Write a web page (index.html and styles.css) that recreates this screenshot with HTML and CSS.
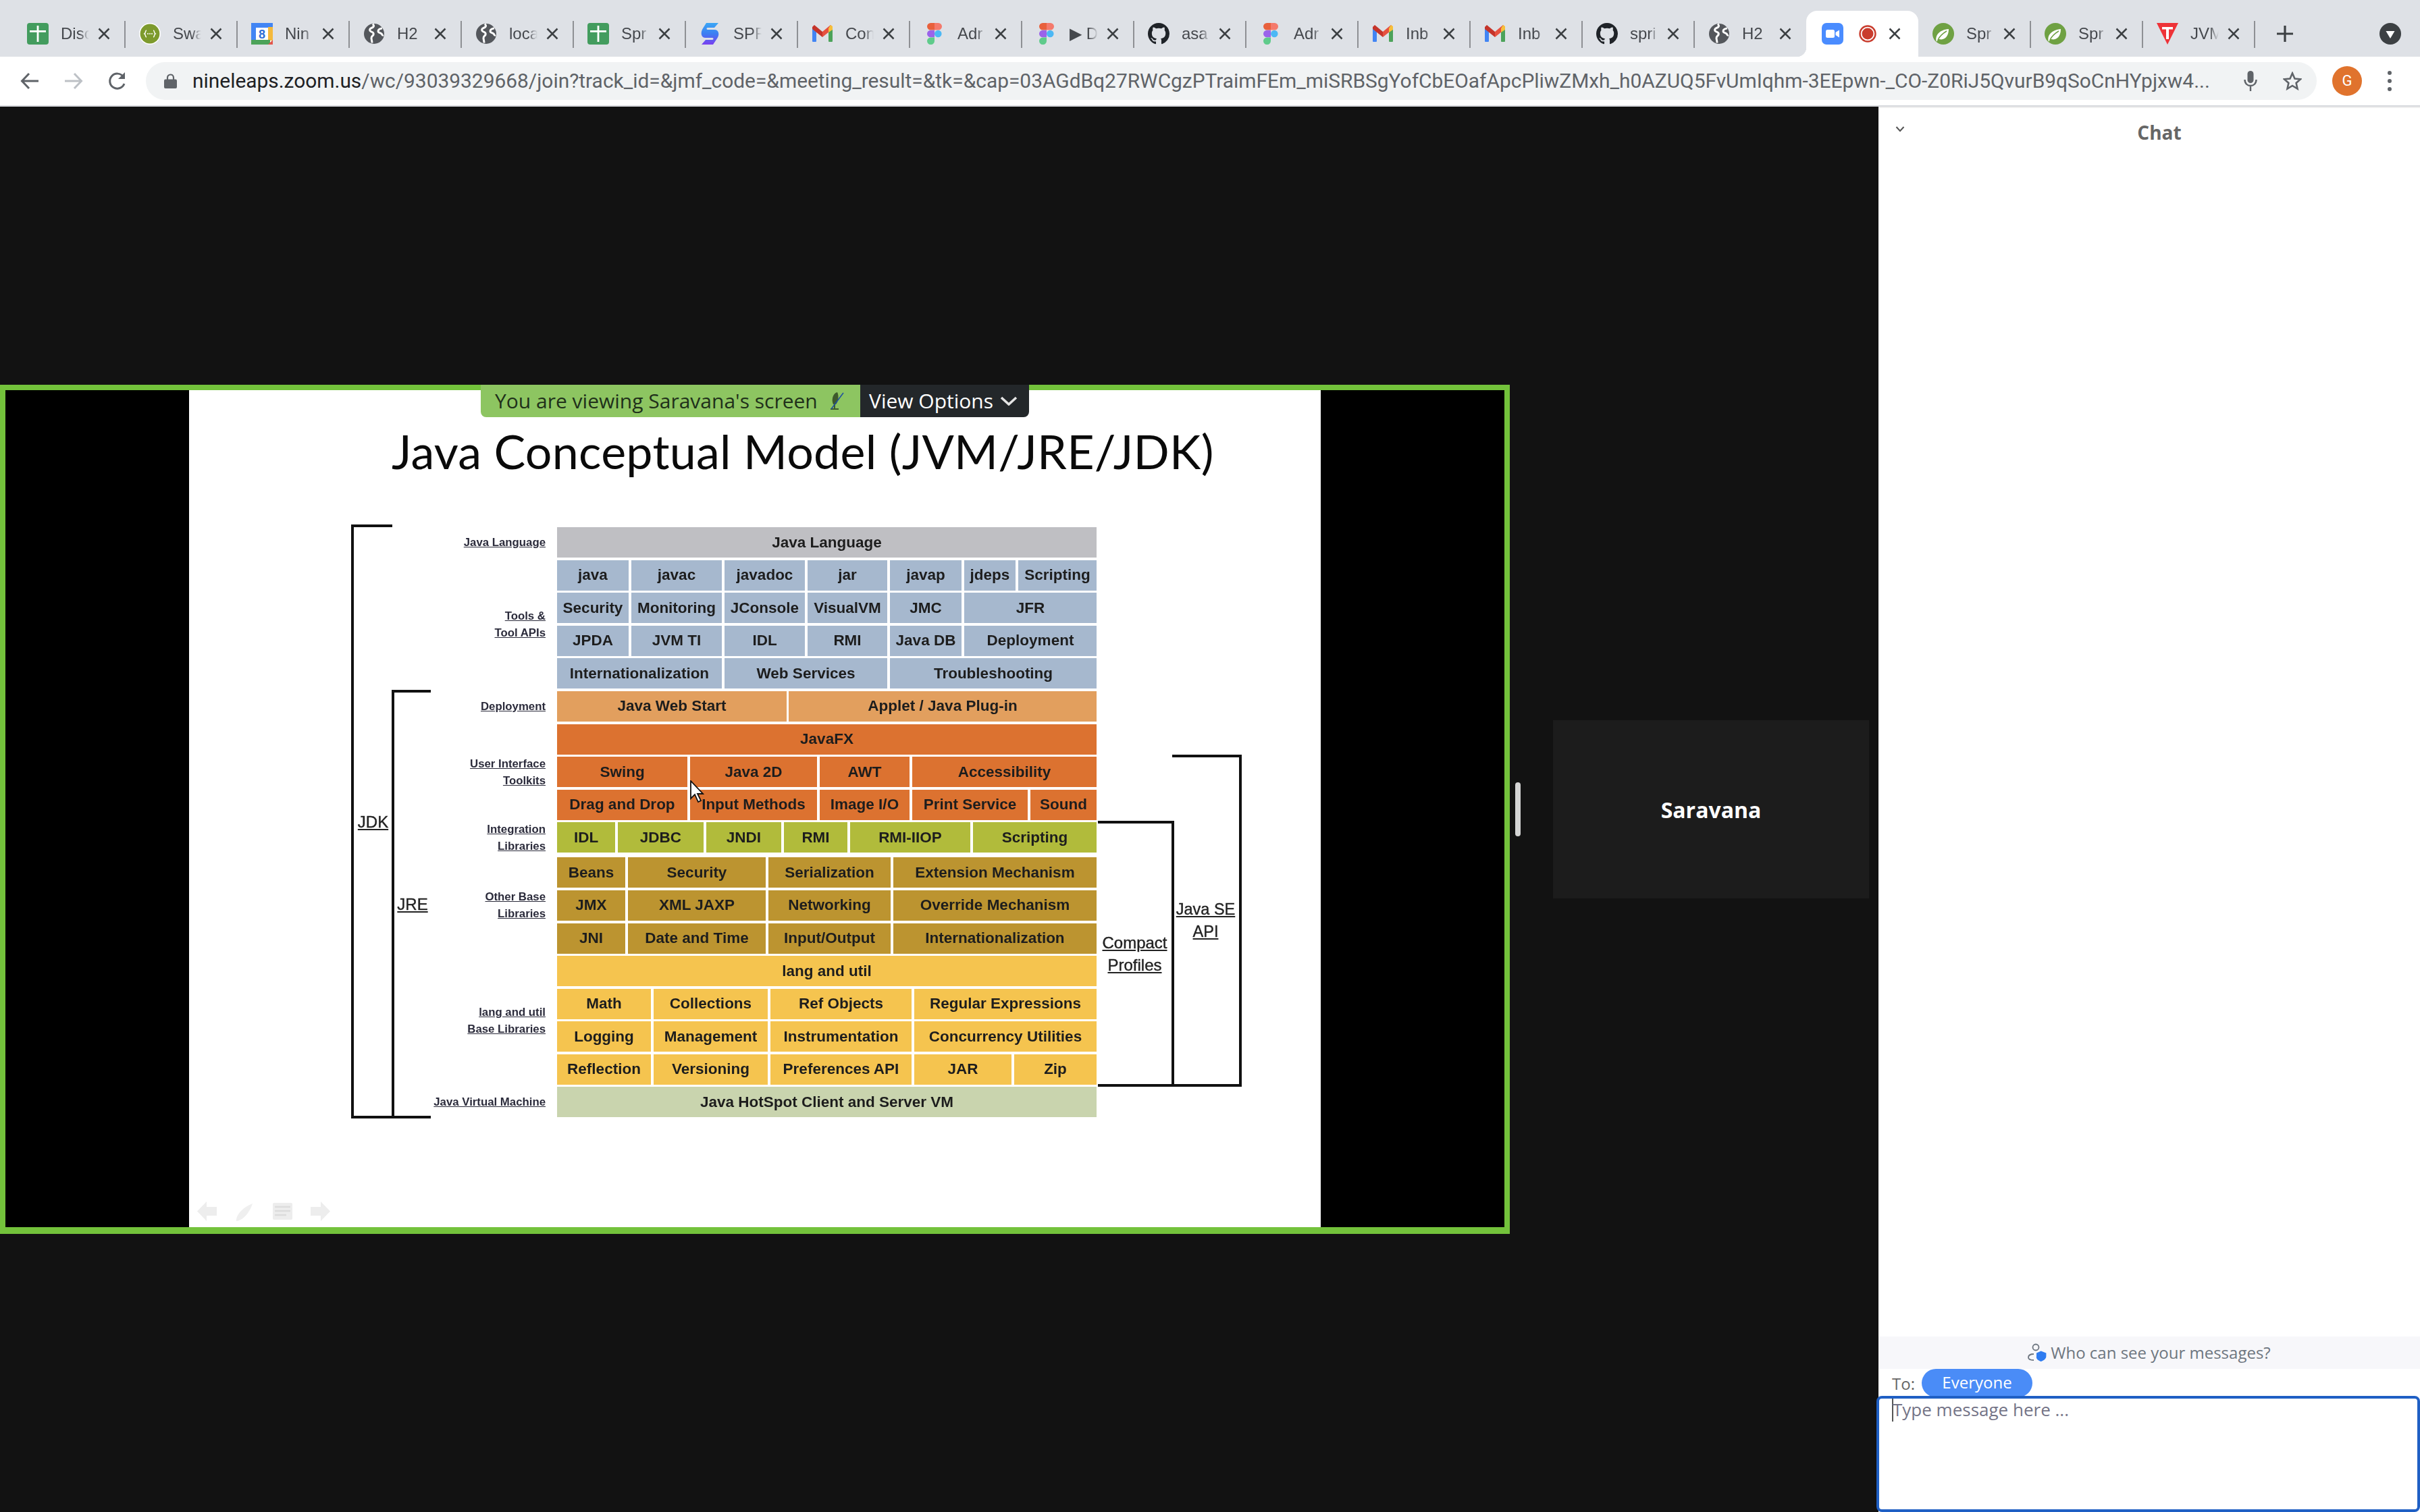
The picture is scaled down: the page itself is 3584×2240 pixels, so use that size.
FILE: index.html
```html
<!DOCTYPE html>
<html lang="en">
<head>
<meta charset="utf-8">
<title>Zoom meeting</title>
<link rel="stylesheet" href="styles.css">
</head>
<body>
<svg class="defs" aria-hidden="true">
  <symbol id="i-sheets" viewBox="0 0 32 32"><rect x="0" y="0" width="32" height="32" rx="4" fill="#439c5e"/><rect x="14.6" y="4" width="2.8" height="24" fill="#fff"/><rect x="4" y="11" width="24" height="2.8" fill="#fff"/></symbol>
  <symbol id="i-swagger" viewBox="0 0 32 32"><circle cx="16" cy="16" r="16" fill="#fff"/><circle cx="16" cy="16" r="14.4" fill="#7d9a2d"/><path d="M11 11c-2 0-1 4-3 5 2 1 1 5 3 5M21 11c2 0 1 4 3 5-2 1-1 5-3 5" fill="none" stroke="#fff" stroke-width="1.4"/><circle cx="13" cy="16" r="1" fill="#fff"/><circle cx="16" cy="16" r="1" fill="#fff"/><circle cx="19" cy="16" r="1" fill="#fff"/></symbol>
  <symbol id="i-globe" viewBox="0 0 32 32"><circle cx="16" cy="16" r="15" fill="#54575c"/><path d="M14 1.500c3 3 1 5-2 6-3 1-3 4-1 5 3 1.500 5 2 4 5-1 2-3 2-3 5 0 2 1 4 1 7M28 8c-3 0-6 2-6 4 0 3 3 2 5 4 1 1 1 3 3 2" fill="none" stroke="#fff" stroke-width="3"/></symbol>
  <symbol id="i-spr" viewBox="0 0 32 32"><defs><linearGradient id="spr-g" x1="0" y1="0" x2="0" y2="1"><stop offset="0" stop-color="#3ba7f5"/><stop offset=".5" stop-color="#3d7ef2"/><stop offset="1" stop-color="#7a3ff0"/></linearGradient></defs><path d="M28 0 22 7H12c-2 0-2 3 0 3h10c7 0 8 8 4 13l-6 9H3l6-7h10c2 0 2-3 0-3H9C2 22 1 14 5 8l5-8z" fill="url(#spr-g)"/></symbol>
  <symbol id="i-gmail" viewBox="0 0 32 32"><rect x="1" y="6" width="6" height="22" rx="1" fill="#4285f4"/><rect x="25" y="6" width="6" height="22" rx="1" fill="#4ca35a"/><polygon points="1,6 4,3 16,13 16,21 1,9" fill="#c5342a"/><polygon points="31,6 28,3 16,13 16,21 31,9" fill="#e6503f"/><polygon points="25,8 28,3 31,5 31,10 25,14" fill="#f6bf3a"/></symbol>
  <symbol id="i-figma" viewBox="0 0 32 32"><path d="M5 5.300a5.300 5.300 0 0 1 5.300-5.300H16V10.600H10.300A5.300 5.300 0 0 1 5 5.300z" fill="#e8603c"/><path d="M16 0h5.700a5.300 5.300 0 0 1 0 10.600H16z" fill="#f47a6c"/><path d="M5 16a5.300 5.300 0 0 1 5.300-5.300H16v10.600H10.300A5.300 5.300 0 0 1 5 16z" fill="#9b63ea"/><circle cx="21.300" cy="16" r="5.300" fill="#4cb8f5"/><path d="M5 26.700a5.300 5.300 0 0 1 5.300-5.300H16v5.300a5.300 5.300 0 0 1-11 0z" fill="#5fcb8b"/></symbol>
  <symbol id="i-github" viewBox="0 0 16 16"><path fill="#1f2328" d="M8 0C3.580 0 0 3.580 0 8c0 3.540 2.290 6.530 5.470 7.590.4.070.55-.17.55-.38 0-.19-.01-.82-.01-1.490-2.010.37-2.530-.49-2.690-.94-.09-.23-.48-.94-.82-1.130-.28-.15-.68-.52-.01-.53.63-.01 1.080.58 1.230.82.72 1.210 1.870.87 2.330.66.07-.52.28-.87.51-1.070-1.780-.2-3.640-.89-3.640-3.950 0-.87.31-1.590.82-2.150-.08-.2-.36-1.020.08-2.120 0 0 .67-.21 2.200.82.64-.18 1.320-.27 2-.27.68 0 1.360.09 2 .27 1.530-1.040 2.200-.82 2.200-.82.44 1.100.16 1.920.08 2.120.51.56.82 1.270.82 2.150 0 3.070-1.870 3.750-3.650 3.950.29.25.54.73.54 1.480 0 1.070-.01 1.930-.01 2.200 0 .21.15.46.55.38A8.013 8.013 0 0016 8c0-4.420-3.580-8-8-8z"/></symbol>
  <symbol id="i-spring" viewBox="0 0 32 32"><circle cx="16" cy="16" r="16" fill="#6fa143"/><path d="M6 28C3 19 10 10 24 9c0 11-6 17-14 15-2 0-3 2-4 4z" fill="#fff"/><path d="M8 25c3-6 8-10 13-13" stroke="#6fa143" stroke-width="1.500" fill="none"/></symbol>
  <symbol id="i-jvm" viewBox="0 0 32 32"><polygon points="0,0 32,0 16,32" fill="#ee3338"/><rect x="8" y="6" width="16" height="3.500" fill="#fff"/><rect x="14" y="6" width="4" height="18" fill="#fff"/></symbol>
  <symbol id="i-zoom" viewBox="0 0 32 32"><rect width="32" height="32" rx="7" fill="#4a8cff"/><rect x="6" y="10" width="13" height="12" rx="2.500" fill="#fff"/><polygon points="20.500,14 26,10.500 26,21.500 20.500,18" fill="#fff"/></symbol>
  <symbol id="i-record" viewBox="0 0 26 32"><circle cx="13" cy="16" r="11.500" fill="none" stroke="#c93c2d" stroke-width="2.400"/><circle cx="13" cy="16" r="8.500" fill="#c93c2d"/></symbol>
  <symbol id="i-close" viewBox="0 0 20 20"><path d="M2.500 2.500l15 15M17.500 2.500l-15 15" stroke="#3c4043" stroke-width="2.500" fill="none"/></symbol>
</svg>

<header class="tabstrip">
  <div class="tab"><svg class="fav"><use href="#i-sheets"/></svg><span class="tt">Disc</span><svg class="x"><use href="#i-close"/></svg></div>
  <div class="tab"><svg class="fav"><use href="#i-swagger"/></svg><span class="tt">Swa</span><svg class="x"><use href="#i-close"/></svg></div>
  <div class="tab"><svg class="fav" viewBox="0 0 32 32"><rect width="32" height="32" rx="2" fill="#fff"/><rect width="32" height="7" fill="#4285f4"/><rect width="7" height="26" fill="#4285f4"/><rect x="25" y="6" width="7" height="20" fill="#f4b93c"/><rect y="25" width="28" height="7" fill="#4ca35a"/><polygon points="25,32 32,25 32,32" fill="#e2574c"/><rect x="7" y="7" width="18" height="18" fill="#fff"/><text x="16" y="23" class="cal-num">8</text></svg><span class="tt">Nin</span><svg class="x"><use href="#i-close"/></svg></div>
  <div class="tab"><svg class="fav"><use href="#i-globe"/></svg><span class="tt">H2</span><svg class="x"><use href="#i-close"/></svg></div>
  <div class="tab"><svg class="fav"><use href="#i-globe"/></svg><span class="tt">loca</span><svg class="x"><use href="#i-close"/></svg></div>
  <div class="tab"><svg class="fav"><use href="#i-sheets"/></svg><span class="tt">Spr</span><svg class="x"><use href="#i-close"/></svg></div>
  <div class="tab"><svg class="fav"><use href="#i-spr"/></svg><span class="tt">SPR</span><svg class="x"><use href="#i-close"/></svg></div>
  <div class="tab"><svg class="fav"><use href="#i-gmail"/></svg><span class="tt">Con</span><svg class="x"><use href="#i-close"/></svg></div>
  <div class="tab"><svg class="fav"><use href="#i-figma"/></svg><span class="tt">Adr</span><svg class="x"><use href="#i-close"/></svg></div>
  <div class="tab"><svg class="fav"><use href="#i-figma"/></svg><span class="tt">▶ D</span><svg class="x"><use href="#i-close"/></svg></div>
  <div class="tab"><svg class="fav"><use href="#i-github"/></svg><span class="tt">asa</span><svg class="x"><use href="#i-close"/></svg></div>
  <div class="tab"><svg class="fav"><use href="#i-figma"/></svg><span class="tt">Adr</span><svg class="x"><use href="#i-close"/></svg></div>
  <div class="tab"><svg class="fav"><use href="#i-gmail"/></svg><span class="tt">Inb</span><svg class="x"><use href="#i-close"/></svg></div>
  <div class="tab"><svg class="fav"><use href="#i-gmail"/></svg><span class="tt">Inb</span><svg class="x"><use href="#i-close"/></svg></div>
  <div class="tab"><svg class="fav"><use href="#i-github"/></svg><span class="tt">spri</span><svg class="x"><use href="#i-close"/></svg></div>
  <div class="tab before-active"><svg class="fav"><use href="#i-globe"/></svg><span class="tt">H2</span><svg class="x"><use href="#i-close"/></svg></div>
  <div class="tab active"><svg class="fav"><use href="#i-zoom"/></svg><svg class="rec"><use href="#i-record"/></svg><svg class="x"><use href="#i-close"/></svg></div>
  <div class="tab"><svg class="fav"><use href="#i-spring"/></svg><span class="tt">Spr</span><svg class="x"><use href="#i-close"/></svg></div>
  <div class="tab"><svg class="fav"><use href="#i-spring"/></svg><span class="tt">Spr</span><svg class="x"><use href="#i-close"/></svg></div>
  <div class="tab"><svg class="fav"><use href="#i-jvm"/></svg><span class="tt">JVM</span><svg class="x"><use href="#i-close"/></svg></div>
  <svg class="plus" viewBox="0 0 24 24"><path d="M12 0v24M0 12h24" stroke="#3c4043" stroke-width="3.200" fill="none"/></svg>
  <svg class="tabmenu" viewBox="0 0 32 32"><circle cx="16" cy="16" r="16" fill="#3c4043"/><polygon points="9.500,12 22.500,12 16,23" fill="#fff"/></svg>
</header>

<nav class="toolbar">
  <svg class="nav" viewBox="0 0 28 28"><path d="M27 14H3M13 3 2.500 14 13 25" fill="none" stroke="#5f6368" stroke-width="3"/></svg>
  <svg class="nav" viewBox="0 0 28 28"><path d="M1 14h24M15 3l10.500 11L15 25" fill="none" stroke="#bdc1c6" stroke-width="3"/></svg>
  <svg class="nav" viewBox="0 0 28 28"><path d="M24 18a11 11 0 1 1-1.500-10.500" fill="none" stroke="#5f6368" stroke-width="3"/><polygon points="25,1 25,11 15,11" fill="#5f6368"/></svg>
  <div class="omnibox">
    <svg class="lock" viewBox="0 0 19 22"><path d="M5 9V6a4.500 4.500 0 0 1 9 0v3" fill="none" stroke="#5f6368" stroke-width="2.200"/><rect y="8.500" width="19" height="13.500" rx="2" fill="#5f6368"/></svg>
    <div class="url"><span class="host">nineleaps.zoom.us</span>/wc/93039329668/join?track_id=&amp;jmf_code=&amp;meeting_result=&amp;tk=&amp;cap=03AGdBq27RWCgzPTraimFEm_miSRBSgYofCbEOafApcPliwZMxh_h0AZUQ5FvUmIqhm-3EEpwn-_CO-Z0RiJ5QvurB9qSoCnHYpjxw4...</div>
    <svg class="mic" viewBox="0 0 20 30"><rect x="5.500" y="0" width="9" height="18" rx="4.500" fill="#5f6368"/><path d="M1.500 13c0 6 4 9 8.500 9s8.500-3 8.500-9M10 22v8" fill="none" stroke="#5f6368" stroke-width="2.400"/></svg>
    <svg class="star" viewBox="0 0 28 28"><polygon points="14,2.500 17.500,10.500 26,11.300 19.600,17 21.500,25.500 14,21 6.500,25.500 8.400,17 2,11.300 10.500,10.500" fill="none" stroke="#5f6368" stroke-width="2.600"/></svg>
  </div>
  <div class="avatar">G</div>
  <div class="dots"><i></i><i></i><i></i></div>
</nav>

<main class="app">
  <section class="stage">
    <div class="frame">
      <div class="slide">
        <h1 class="title">Java Conceptual Model (JVM/JRE/JDK)</h1>
        <div class="stack">
          <div class="group">
            <div class="label"><u>Java Language</u></div>
            <div class="rows">
              <div class="row c-full"><div class="cell lang-grey">Java Language</div></div>
            </div>
          </div>
          <div class="group">
            <div class="label"><u>Tools &amp;</u><u>Tool APIs</u></div>
            <div class="rows">
              <div class="row c-tools blue">
                <div class="cell">java</div><div class="cell">javac</div><div class="cell">javadoc</div><div class="cell">jar</div><div class="cell">javap</div><div class="cell">jdeps</div><div class="cell">Scripting</div>
              </div>
              <div class="row c-tools blue">
                <div class="cell">Security</div><div class="cell">Monitoring</div><div class="cell">JConsole</div><div class="cell">VisualVM</div><div class="cell">JMC</div><div class="cell s2">JFR</div>
              </div>
              <div class="row c-tools blue">
                <div class="cell">JPDA</div><div class="cell">JVM TI</div><div class="cell">IDL</div><div class="cell">RMI</div><div class="cell">Java DB</div><div class="cell s2">Deployment</div>
              </div>
              <div class="row c-tools blue">
                <div class="cell s2">Internationalization</div><div class="cell s2">Web Services</div><div class="cell s3">Troubleshooting</div>
              </div>
            </div>
          </div>
          <div class="group">
            <div class="label"><u>Deployment</u></div>
            <div class="rows">
              <div class="row c-deploy light-orange"><div class="cell">Java Web Start</div><div class="cell">Applet / Java Plug-in</div></div>
            </div>
          </div>
          <div class="group">
            <div class="label"><u>User Interface</u><u>Toolkits</u></div>
            <div class="rows">
              <div class="row c-full orange"><div class="cell">JavaFX</div></div>
              <div class="row c-ui orange"><div class="cell">Swing</div><div class="cell">Java 2D</div><div class="cell">AWT</div><div class="cell s2">Accessibility</div></div>
              <div class="row c-ui orange"><div class="cell">Drag and Drop</div><div class="cell">Input Methods</div><div class="cell">Image I/O</div><div class="cell">Print Service</div><div class="cell">Sound</div></div>
            </div>
          </div>
          <div class="group">
            <div class="label"><u>Integration</u><u>Libraries</u></div>
            <div class="rows">
              <div class="row c-integ green"><div class="cell">IDL</div><div class="cell">JDBC</div><div class="cell">JNDI</div><div class="cell">RMI</div><div class="cell">RMI-IIOP</div><div class="cell">Scripting</div></div>
            </div>
          </div>
          <div class="group other">
            <div class="label"><u>Other Base</u><u>Libraries</u></div>
            <div class="rows">
              <div class="row c-other brown"><div class="cell">Beans</div><div class="cell">Security</div><div class="cell">Serialization</div><div class="cell">Extension Mechanism</div></div>
              <div class="row c-other brown"><div class="cell">JMX</div><div class="cell">XML JAXP</div><div class="cell">Networking</div><div class="cell">Override Mechanism</div></div>
              <div class="row c-other brown"><div class="cell">JNI</div><div class="cell">Date and Time</div><div class="cell">Input/Output</div><div class="cell">Internationalization</div></div>
            </div>
          </div>
          <div class="group">
            <div class="label"><u>lang and util</u><u>Base Libraries</u></div>
            <div class="rows">
              <div class="row c-full yellow"><div class="cell">lang and util</div></div>
              <div class="row c-lang yellow"><div class="cell">Math</div><div class="cell">Collections</div><div class="cell">Ref Objects</div><div class="cell s2">Regular Expressions</div></div>
              <div class="row c-lang yellow"><div class="cell">Logging</div><div class="cell">Management</div><div class="cell">Instrumentation</div><div class="cell s2">Concurrency Utilities</div></div>
              <div class="row c-lang yellow"><div class="cell">Reflection</div><div class="cell">Versioning</div><div class="cell">Preferences API</div><div class="cell">JAR</div><div class="cell">Zip</div></div>
            </div>
          </div>
          <div class="group">
            <div class="label"><u>Java Virtual Machine</u></div>
            <div class="rows">
              <div class="row c-full"><div class="cell vm">Java HotSpot Client and Server VM</div></div>
            </div>
          </div>
        </div>

        <div class="bracket b-jdk"><u>JDK</u></div>
        <div class="bracket b-jre"><u>JRE</u></div>
        <div class="bracket b-compact"><u>Compact</u><u>Profiles</u></div>
        <div class="bracket b-se"><u>Java SE</u><u>API</u></div>

        <div class="slide-tools">
          <svg class="st" viewBox="0 0 29 29"><polygon points="14,0 14,8 29,8 29,21 14,21 14,29 0,14.500" fill="#ededed"/></svg>
          <svg class="st" viewBox="0 0 29 29"><path d="M2 26C4 16 14 8 26 3 22 16 12 28 2 29z" fill="#efefef"/></svg>
          <svg class="st" viewBox="0 0 29 29"><rect y="2" width="29" height="25" rx="2" fill="#ededed"/><path d="M3 8h23M3 14h23M3 20h17" stroke="#dcdcdc" stroke-width="2.500"/></svg>
          <svg class="st" viewBox="0 0 29 29"><polygon points="15,0 15,8 0,8 0,21 15,21 15,29 29,14.500" fill="#ededed"/></svg>
        </div>
        <svg class="cursor" viewBox="0 0 22 34"><path d="M2 1v26l6-6 5 11 4-2-5-10h8z" fill="#fff" stroke="#111" stroke-width="1.800"/></svg>
      </div>
      <div class="banner">
        <div class="banner-msg">You are viewing Saravana's screen
          <svg class="muted" viewBox="0 0 26 26"><path d="M10 18c-3-6-1-16 6-18 3 6 1 15-2 18z" fill="#3e5a2c"/><path d="M6 25h12M12 18v7" stroke="#3e5a2c" stroke-width="2" fill="none"/><path d="M7 25 25 1" stroke="#1f4fa0" stroke-width="1.600"/></svg>
        </div>
        <div class="banner-opt">View Options
          <svg class="opt-chev" viewBox="0 0 26 14"><path d="M2 2l11 10L24 2" fill="none" stroke="#e4e4e4" stroke-width="3.600"/></svg>
        </div>
      </div>
    </div>
    <div class="handle"></div>
    <div class="thumb">Saravana</div>
  </section>

  <aside class="chat">
    <div class="chat-head">
      <svg class="chat-chev" viewBox="0 0 14 10"><path d="M1.500 2 7 8l5.500-6" fill="none" stroke="#555" stroke-width="2"/></svg>
      <div class="chat-title">Chat</div>
    </div>
    <div class="chat-body"></div>
    <div class="who">
      <svg class="who-icon" viewBox="0 0 28 28"><circle cx="12" cy="6" r="4.500" fill="none" stroke="#6e7680" stroke-width="1.800"/><path d="M9 16c-5 0-8 2-8 5s3 4 8 4" fill="none" stroke="#6e7680" stroke-width="1.800"/><path d="M20 12l8 3v5c0 4-4 7-8 8-4-1-8-4-7-8v-5z" fill="#2f7cf0" transform="translate(.5 0) scale(.96)"/></svg>
      <span>Who can see your messages?</span>
    </div>
    <div class="to"><span class="to-label">To:</span><span class="pill">Everyone</span></div>
    <div class="composer"><i class="caret"></i><span class="hint">Type message here ...</span></div>
  </aside>
</main>
</body>
</html>
```
FILE: styles.css
```css
* { box-sizing: border-box; }
html, body { margin: 0; padding: 0; }
body { width: 3584px; height: 2240px; overflow: hidden; background: #121212; font-family: "Open Sans", sans-serif; display: flex; flex-direction: column; }
.defs { position: absolute; width: 0; height: 0; }
.cal-num { font: bold 18px "Liberation Sans", sans-serif; fill: #2f6fd6; text-anchor: middle; }

/* tab strip */
.tabstrip { height: 84px; flex: none; background: #dee1e6; padding: 16px 0 0 18.5px; display: flex; align-items: center; }
.tab { position: relative; flex: none; width: 166px; height: 68px; padding-left: 21.5px; display: flex; align-items: center; }
.tab::after { content: ""; position: absolute; right: -1px; top: 15px; width: 2px; height: 40px; background: #8e9094; }
.tab.before-active::after, .tab.active::after { display: none; }
.tab.active { background: #fff; border-radius: 16px 16px 0 0; padding-left: 23.5px; }
.tab.active::before { content: ""; position: absolute; bottom: 0; left: -14px; width: 14px; height: 14px; background: radial-gradient(circle at 0 0, transparent 14px, #fff 14.5px); }
.tab.active .x { margin-left: 17px; }
.fav { width: 32px; height: 32px; flex: none; }
.tt { width: 58px; margin: 0 -16px 0 18px; white-space: nowrap; font: 24px/32px "Liberation Sans", sans-serif; color: #45484d; -webkit-mask-image: linear-gradient(to right, #000 28px, transparent 42px); mask-image: linear-gradient(to right, #000 28px, transparent 42px); }
.x { width: 20px; height: 20px; flex: none; margin-left: 12px; }
.rec { width: 26px; height: 32px; flex: none; margin-left: 23px; }
.plus { width: 24px; height: 24px; flex: none; margin-left: 33px; }
.tabmenu { width: 32px; height: 32px; flex: none; margin-left: auto; margin-right: 28px; }

/* toolbar */
.toolbar { height: 74px; flex: none; background: #fff; border-bottom: 2px solid #d6d8dc; display: flex; align-items: center; padding-left: 30px; }
.nav { width: 28px; height: 28px; flex: none; margin-right: 37px; }
.nav:nth-of-type(3) { margin-right: 28px; }
.omnibox { width: 3215px; height: 56px; flex: none; background: #f1f3f4; border-radius: 28px; display: flex; align-items: center; padding: 0 22px 0 27px; }
.lock { width: 19px; height: 22px; flex: none; margin-right: 23px; }
.url { flex: 1; min-width: 0; margin-right: 51px; white-space: nowrap; font: 29.9px/40px Roboto, sans-serif; color: #5f6368; }
.host { color: #202124; }
.mic { width: 20px; height: 30px; flex: none; margin-right: 38px; }
.star { width: 28px; height: 28px; flex: none; }
.avatar { width: 44px; height: 44px; flex: none; margin-left: 23px; border-radius: 50%; background: #e0732d; color: #fff; font: 22px/44px Roboto, sans-serif; text-align: center; }
.dots { width: 8px; flex: none; margin-left: 38px; display: flex; flex-direction: column; gap: 6px; }
.dots i { width: 6px; height: 6px; border-radius: 50%; background: #5f6368; display: block; }

/* main */
.app { flex: 1; min-height: 0; display: flex; }
.stage { width: 2782px; flex: none; display: flex; align-items: center; background: #121212; }
.frame { position: relative; width: 2236px; height: 1258px; flex: none; border: 8px solid #73c23b; border-bottom-width: 10px; background: #000; display: flex; justify-content: center; }
.handle { width: 8px; height: 80px; flex: none; margin-left: 8px; border-radius: 4px; background: #d4d4d4; }
.thumb { width: 468px; height: 264px; flex: none; margin-left: 48px; background: #1c1c1c; color: #fff; font: 700 32px/266px "Open Sans", sans-serif; text-align: center; }

/* slide */
.slide { position: relative; width: 1676px; height: 1240px; background: #fff; overflow: hidden; }
.title { margin: 0; height: 203px; padding: 40px 0 0 300px; font: 400 70px/100px Lato, sans-serif; color: #0a0a0a; white-space: nowrap; letter-spacing: .25px; filter: blur(.5px); }
.stack { margin-left: 340px; display: flex; flex-direction: column; gap: 3.6px; font-family: "Liberation Sans", sans-serif; filter: blur(.5px); }
.group { display: flex; align-items: center; }
.group.other { margin-top: 3.4px; }
.label { width: 188px; height: 45px; margin-right: 17px; flex: none; display: flex; flex-direction: column; align-items: flex-end; justify-content: center; font-size: 16.8px; line-height: 25px; font-weight: 700; color: #2b2b3b; white-space: nowrap; }
.rows { width: 799px; flex: none; display: flex; flex-direction: column; gap: 3.6px; }
.row { display: grid; column-gap: 4px; height: 45px; }
.cell { display: flex; align-items: center; justify-content: center; font-size: 22.5px; font-weight: 700; color: #1d1d1d; white-space: nowrap; background: var(--c); }
.s2 { grid-column: span 2; }
.s3 { grid-column: span 3; }
.c-full { grid-template-columns: 1fr; }
.c-tools { grid-template-columns: 106px 134px 119px 118px 106px 76px 116px; }
.c-deploy { grid-template-columns: 340px 456px; column-gap: 3px; }
.c-ui { grid-template-columns: 193px 188px 133px 171px 98px; }
.c-integ { grid-template-columns: 86px 127px 111px 94px 178px 183px; }
.c-other { grid-template-columns: 101px 204px 181px 301px; }
.c-lang { grid-template-columns: 139px 169px 209px 144px 122px; }
.lang-grey { background: #bfbfc3; }
.blue { --c: #a6b8ce; }
.light-orange { --c: #e29f5e; }
.orange { --c: #dc7230; }
.green { --c: #b1bb3b; }
.brown { --c: #bc9430; }
.yellow { --c: #f5c44f; }
.vm { background: #c9d4ae; }

.bracket { position: absolute; display: flex; flex-direction: column; align-items: center; justify-content: center; border: 4px solid #111; font: 400 24px/33px "Liberation Sans", sans-serif; color: #222; -webkit-text-stroke: .4px #222; filter: blur(.4px); }
.b-jdk { left: 240px; top: 199px; width: 61px; height: 880px; border-right: 0; }
.b-jre { left: 300px; top: 444px; width: 58px; height: 635px; border-right: 0; }
.b-compact { left: 1346px; top: 638px; width: 113px; height: 394px; border-left: 0; }
.b-se { left: 1456px; top: 540px; width: 103px; height: 492px; border-left: 0; font-size: 23.5px; }

.slide-tools { position: absolute; left: 12px; top: 1202px; display: flex; gap: 27px; }
.st { width: 29px; height: 29px; flex: none; }
.cursor { position: absolute; left: 741px; top: 578px; width: 22px; height: 34px; }

/* banner */
.banner { position: absolute; left: 704px; top: -8px; height: 48px; display: flex; border-radius: 0 0 8px 8px; overflow: hidden; font: 400 30px/46px "Open Sans", sans-serif; white-space: nowrap; }
.banner-msg { width: 562px; padding-left: 21px; display: flex; align-items: center; gap: 13px; background: #8dc561; color: #20301a; }
.banner-opt { width: 250px; padding-left: 13px; display: flex; align-items: center; gap: 10px; background: #23272a; color: #fff; }
.muted { width: 26px; height: 26px; flex: none; }
.opt-chev { width: 26px; height: 14px; flex: none; }

/* chat */
.chat { flex: 1; min-width: 0; display: flex; flex-direction: column; background: #fff; border-top: 2px solid #eeeeee; }
.chat-head { height: 72px; flex: none; display: flex; align-items: center; padding: 0 9px 0 25px; }
.chat-chev { width: 14px; height: 10px; flex: none; margin-top: -10px; }
.chat-title { flex: 1; text-align: center; font: 700 28px/40px "Open Sans", sans-serif; color: #666; }
.chat-body { flex: 1; min-height: 0; }
.who { height: 48px; flex: none; background: #f7f7fa; display: flex; align-items: center; justify-content: center; gap: 6px; font-size: 24px; line-height: 48px; color: #6e7680; }
.who-icon { width: 28px; height: 28px; flex: none; }
.to { height: 42px; flex: none; display: flex; align-items: center; padding-left: 20px; font-size: 24px; color: #666; }
.to-label { width: 44px; }
.pill { width: 164px; height: 42px; border-radius: 21px; background: #4a8cf7; color: #fff; text-align: center; line-height: 40px; }
.composer { height: 172px; flex: none; margin: -2px 0 0 -3px; border: 4px solid #1f5fc4; border-radius: 8px; display: flex; align-items: flex-start; padding-left: 19px; background: #fff; position: relative; }
.caret { width: 2px; height: 34px; flex: none; margin-right: -1px; background: #555; }
.hint { font-size: 26px; line-height: 32px; color: #747487; }
```
